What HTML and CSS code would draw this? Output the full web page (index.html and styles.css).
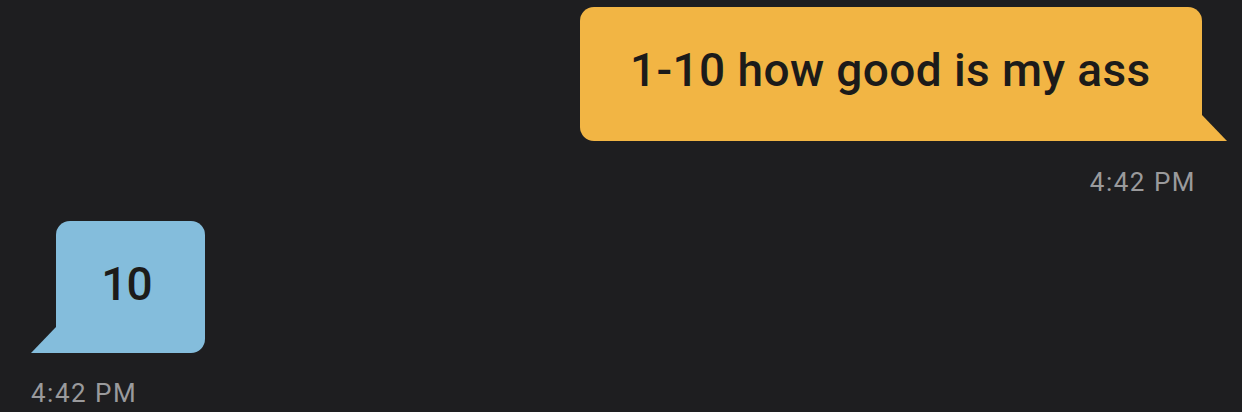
FILE: index.html
```html
<!DOCTYPE html>
<html>
<head>
<meta charset="utf-8">
<link rel="stylesheet" href="styles.css">
</head>
<body>
<div class="chat">
  <div class="msg msg-sent">
    <div class="bubble bubble-sent">1-10 how good is my ass</div>
    <div class="time time-sent">4:42 PM</div>
  </div>
  <div class="msg msg-recv">
    <div class="bubble bubble-recv">10</div>
    <div class="time time-recv">4:42 PM</div>
  </div>
</div>
</body>
</html>
```

FILE: styles.css
```css
html, body {
  margin: 0;
  padding: 0;
  background: #1e1e20;
  height: 100%;
}
body {
  font-family: Roboto, "Liberation Sans", sans-serif;
}
.chat {
  display: flex;
  flex-direction: column;
  padding-top: 7px;
}
.msg {
  display: flex;
  flex-direction: column;
}
.msg-sent {
  align-items: flex-end;
}
.msg-recv {
  align-items: flex-start;
  margin-top: 24px;
}
.bubble {
  position: relative;
  font-size: 46px;
  font-weight: 500;
  line-height: 54px;
  color: #1c1b1a;
  white-space: nowrap;
}
.bubble::after {
  content: "";
  position: absolute;
  bottom: 0;
  width: 0;
  height: 0;
  border-style: solid;
}
.bubble-sent {
  background: #f2b544;
  border-radius: 14px 14px 0 14px;
  padding: 36px 54px 44px 50px;
  margin-right: 40px;
  width: 518px;
  letter-spacing: 0.4px;
}
.bubble-sent::after {
  right: -25px;
  border-width: 26px 0 0 25px;
  border-color: transparent transparent transparent #f2b544;
}
.bubble-recv {
  background: #84bddc;
  border-radius: 14px 14px 14px 0;
  padding: 36px 0 42px 0;
  margin-left: 56px;
  width: 149px;
  text-align: center;
  text-indent: -8px;
  letter-spacing: -1px;
}
.bubble-recv::after {
  left: -25px;
  border-width: 26px 25px 0 0;
  border-color: transparent #84bddc transparent transparent;
}
.time {
  font-size: 26px;
  line-height: 30px;
  color: #9a9a9c;
  margin-top: 26px;
  letter-spacing: 1.5px;
}
.time-sent {
  margin-right: 46px;
}
.time-recv {
  margin-left: 31px;
  margin-top: 25px;
}
```
